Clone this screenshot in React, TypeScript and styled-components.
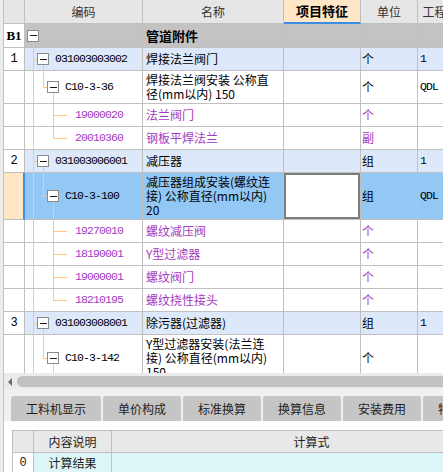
import React from 'react';
import styled, { createGlobalStyle, css } from 'styled-components';

const GRID = '#c0c0c0';
const TREE = '#ffc780';
const PURPLE = '#a23cbf';

const GlobalStyle = createGlobalStyle`
  html, body { margin: 0; padding: 0; }
  body {
    font-family: "Noto Sans CJK SC", "Liberation Sans", sans-serif;
    font-size: 12px;
    color: #000;
  }
`;

type Tone = 'section' | 'bill' | 'plain' | 'active';
type Guide = 'pipe' | 'tee' | 'last' | 'none';

const rowBg: Record<Tone, string> = {
  section: '#c3c3c3',
  bill: '#dde9fb',
  plain: '#ffffff',
  active: '#93c7f4',
};

const Screen = styled.div`
  width: 443px;
  height: 472px;
  overflow: hidden;
  box-sizing: border-box;
  padding-left: 3px;
  background: #ececec;
`;

const Frame = styled.div`
  height: 100%;
  border-left: 1px solid ${GRID};
  display: flex;
  flex-direction: column;
`;

const GridArea = styled.div`
  flex: none;
  height: 373px;
  overflow: hidden;
  background: #fff;
`;

const Row = styled.div<{ $tone: Tone }>`
  display: flex;
  width: max-content;
  min-height: ${p => (p.$tone === 'section' ? 24 : 23)}px;
  background: ${p => rowBg[p.$tone]};
`;

const HeadRow = styled.div`
  display: flex;
  width: max-content;
  height: 24px;
  background: #e6e6e6;
`;

const cellBase = css`
  flex: none;
  box-sizing: border-box;
  border-right: 1px solid ${GRID};
  border-bottom: 1px solid ${GRID};
  display: flex;
  align-items: center;
  line-height: 14px;
`;

const HeadCell = styled.div<{ $w: number; $accent?: boolean }>`
  ${cellBase};
  width: ${p => p.$w}px;
  justify-content: center;
  white-space: nowrap;
  color: ${p => (p.$accent ? '#000' : '#333')};
  font-size: ${p => (p.$accent ? 13 : 12)}px;
  font-weight: ${p => (p.$accent ? 700 : 400)};
  ${p =>
    p.$accent &&
    css`
      background: #ffe6c6;
      border-bottom: 2px solid #3a8ee6;
    `}
`;

const RowHead = styled.div<{ $active?: boolean; $bold?: boolean }>`
  ${cellBase};
  width: 21px;
  justify-content: center;
  background: ${p => (p.$active ? '#ffe6c6' : '#fff')};
  border-right: ${p => (p.$active ? '2px solid #3d8ee9' : `1px solid ${GRID}`)};
  font-family: ${p => (p.$bold ? '"Liberation Serif", serif' : '"Liberation Mono", monospace')};
  font-size: ${p => (p.$bold ? 13 : 12)}px;
  font-weight: ${p => (p.$bold ? 700 : 400)};
`;

const TreeCell = styled.div`
  ${cellBase};
  width: 118px;
  align-items: stretch;
  padding-left: 2px;
`;

const GuideSlot = styled.div<{ $kind: Guide }>`
  flex: none;
  width: 10px;
  background: ${p => {
    const v = `linear-gradient(${TREE}, ${TREE}) no-repeat`;
    if (p.$kind === 'pipe') return `${v} 6px 0 / 1px 100%`;
    if (p.$kind === 'tee') return `${v} 6px 0 / 1px 100%, ${v} 6px 50% / 4px 1px`;
    if (p.$kind === 'last') return `${v} 6px 0 / 1px 50%, ${v} 6px 50% / 4px 1px`;
    return 'none';
  }};
`;

const ToggleSlot = styled.div<{ $kids?: boolean }>`
  flex: none;
  width: 12px;
  display: flex;
  align-items: center;
  background: ${p => (p.$kids ? `linear-gradient(${TREE}, ${TREE}) no-repeat 6px 100% / 1px 50%` : 'none')};
`;

const ToggleBox = styled.div`
  width: 12px;
  height: 12px;
  box-sizing: border-box;
  border: 1px solid #8a8a8a;
  background: #fff;
  display: flex;
  align-items: center;
  justify-content: center;

  &::after {
    content: '';
    width: 7px;
    height: 1px;
    background: #1a1a1a;
  }
`;

const LeafStub = styled.div`
  flex: none;
  width: 10px;
  background: linear-gradient(${TREE}, ${TREE}) no-repeat 0 50% / 100% 1px;
`;

const Mono = styled.span<{ $color?: string }>`
  font-family: "Liberation Mono", monospace;
  font-size: 11.5px;
  letter-spacing: -0.9px;
  color: ${p => p.$color ?? '#000'};
`;

const CodeLabel = styled(Mono)<{ $leaf?: boolean }>`
  align-self: center;
  margin-left: ${p => (p.$leaf ? 8 : 6)}px;
  white-space: nowrap;
`;

const NameCell = styled.div<{ $color?: string; $bold?: boolean }>`
  ${cellBase};
  width: 141px;
  padding: 2px 8px 2px 3px;
  color: ${p => p.$color ?? '#000'};
  font-size: ${p => (p.$bold ? 13 : 12)}px;
  font-weight: ${p => (p.$bold ? 700 : 400)};
`;

const FeatureCell = styled.div<{ $editing?: boolean }>`
  ${cellBase};
  width: 77px;
  ${p =>
    p.$editing &&
    css`
      background: #fff;
      box-shadow: inset 0 0 0 2px #7e7e7e;
    `}
`;

const UnitCell = styled.div<{ $color?: string }>`
  ${cellBase};
  width: 57px;
  padding-left: 1px;
  color: ${p => p.$color ?? '#000'};
`;

const QtyCell = styled.div`
  ${cellBase};
  width: 46px;
  padding-left: 2px;
`;

const HScroll = styled.div`
  flex: none;
  height: 16px;
  box-sizing: border-box;
  padding: 3px 0 2px;
  display: flex;
  align-items: center;
  background: #ebebeb;
`;

const ScrollArrow = styled.div`
  flex: none;
  width: 0;
  height: 0;
  margin: 0 5px 0 4px;
  border-top: 4px solid transparent;
  border-bottom: 4px solid transparent;
  border-right: 4px solid #6a6a6a;
`;

const Thumb = styled.div`
  flex: 1;
  height: 11px;
  background: #c1c1c1;
  border-radius: 6px 0 0 6px;
`;

const TabStrip = styled.div`
  flex: none;
  height: 32px;
  box-sizing: border-box;
  padding: 7px 0 0 7px;
  display: flex;
  gap: 2px;
  background: #f0f0f0;
  overflow: hidden;
`;

const Tab = styled.div`
  flex: none;
  height: 25px;
  padding: 0 15px;
  display: flex;
  align-items: center;
  background: #c5c5c5;
  border-radius: 3px 3px 0 0;
  color: #1e1e1e;
  white-space: nowrap;
`;

const Detail = styled.div`
  flex: 1;
  background: #fff;
  padding: 9px 0 0 8px;
  overflow: hidden;
`;

const DTable = styled.div`
  width: max-content;
  border-top: 1px solid ${GRID};
  border-left: 1px solid ${GRID};
`;

const DRow = styled.div<{ $head?: boolean }>`
  display: flex;
  height: ${p => (p.$head ? 22 : 20)}px;
  background: ${p => (p.$head ? '#e8e8e8' : '#dcf6f8')};
`;

const DCell = styled.div<{ $w: number; $white?: boolean; $mono?: boolean }>`
  ${cellBase};
  width: ${p => p.$w}px;
  justify-content: center;
  color: #222;
  ${p => p.$white && 'background: #fff;'}
  ${p => p.$mono && 'font-family: "Liberation Mono", monospace; font-size: 12px;'}
`;

interface Item {
  no?: string;
  guides: Guide[];
  leaf?: boolean;
  kids?: boolean;
  code: string;
  name: string;
  unit?: string;
  qty?: string;
  tone: Tone;
  material?: boolean;
}

const items: Item[] = [
  { no: 'B1', guides: [], kids: true, code: '', name: '管道附件', tone: 'section' },
  { no: '1', guides: ['tee'], kids: true, code: '031003003002', name: '焊接法兰阀门', unit: '个', qty: '1', tone: 'bill' },
  { guides: ['pipe', 'last'], kids: true, code: 'C10-3-36', name: '焊接法兰阀安装 公称直径(mm以内) 150', unit: '个', qty: 'QDL', tone: 'plain' },
  { guides: ['pipe', 'none', 'tee'], leaf: true, code: '19000020', name: '法兰阀门', unit: '个', tone: 'plain', material: true },
  { guides: ['pipe', 'none', 'last'], leaf: true, code: '20010360', name: '钢板平焊法兰', unit: '副', tone: 'plain', material: true },
  { no: '2', guides: ['tee'], kids: true, code: '031003006001', name: '减压器', unit: '组', qty: '1', tone: 'bill' },
  { guides: ['pipe', 'last'], kids: true, code: 'C10-3-100', name: '减压器组成安装(螺纹连接) 公称直径(mm以内) 20', unit: '组', qty: 'QDL', tone: 'active' },
  { guides: ['pipe', 'none', 'tee'], leaf: true, code: '19270010', name: '螺纹减压阀', unit: '个', tone: 'plain', material: true },
  { guides: ['pipe', 'none', 'tee'], leaf: true, code: '18190001', name: 'Y型过滤器', unit: '个', tone: 'plain', material: true },
  { guides: ['pipe', 'none', 'tee'], leaf: true, code: '19000001', name: '螺纹阀门', unit: '个', tone: 'plain', material: true },
  { guides: ['pipe', 'none', 'last'], leaf: true, code: '18210195', name: '螺纹挠性接头', unit: '个', tone: 'plain', material: true },
  { no: '3', guides: ['tee'], kids: true, code: '031003008001', name: '除污器(过滤器)', unit: '组', qty: '1', tone: 'bill' },
  { guides: ['pipe', 'last'], kids: true, code: 'C10-3-142', name: 'Y型过滤器安装(法兰连接) 公称直径(mm以内) 150', unit: '个', tone: 'plain' },
  { guides: ['pipe', 'pipe', 'tee'], leaf: true, code: '19000020', name: '法兰阀门', unit: '个', tone: 'plain', material: true },
];

const tabs = ['工料机显示', '单价构成', '标准换算', '换算信息', '安装费用', '特征及内容'];

const BillRow = ({ item }: { item: Item }) => {
  const color = item.material ? PURPLE : undefined;
  const active = item.tone === 'active';
  return (
    <Row $tone={item.tone}>
      <RowHead $active={active} $bold={item.tone === 'section'}>
        {item.no}
      </RowHead>
      <TreeCell>
        {item.guides.map((g, i) => (
          <GuideSlot key={i} $kind={g} />
        ))}
        {item.leaf ? (
          <LeafStub />
        ) : (
          <ToggleSlot $kids={item.kids}>
            <ToggleBox />
          </ToggleSlot>
        )}
        {item.code && (
          <CodeLabel $leaf={item.leaf} $color={color}>
            {item.code}
          </CodeLabel>
        )}
      </TreeCell>
      <NameCell $color={color} $bold={item.tone === 'section'}>
        <span>{item.name}</span>
      </NameCell>
      <FeatureCell $editing={active} />
      <UnitCell $color={color}>{item.unit}</UnitCell>
      <QtyCell>{item.qty && <Mono>{item.qty}</Mono>}</QtyCell>
    </Row>
  );
};

const App = () => {
  return (
    <>
      <GlobalStyle />
      <Screen>
        <Frame>
          <GridArea>
            <HeadRow>
              <HeadCell $w={21} />
              <HeadCell $w={118}>编码</HeadCell>
              <HeadCell $w={141}>名称</HeadCell>
              <HeadCell $w={77} $accent>
                项目特征
              </HeadCell>
              <HeadCell $w={57}>单位</HeadCell>
              <HeadCell $w={46}>工程量</HeadCell>
            </HeadRow>
            {items.map((item, i) => (
              <BillRow key={i} item={item} />
            ))}
          </GridArea>

          <HScroll>
            <ScrollArrow />
            <Thumb />
          </HScroll>

          <TabStrip>
            {tabs.map(t => (
              <Tab key={t}>{t}</Tab>
            ))}
          </TabStrip>

          <Detail>
            <DTable>
              <DRow $head>
                <DCell $w={21} />
                <DCell $w={78}>内容说明</DCell>
                <DCell $w={400}>计算式</DCell>
              </DRow>
              <DRow>
                <DCell $w={21} $white $mono>
                  0
                </DCell>
                <DCell $w={78}>计算结果</DCell>
                <DCell $w={400} />
              </DRow>
            </DTable>
          </Detail>
        </Frame>
      </Screen>
    </>
  );
};

export default App;
